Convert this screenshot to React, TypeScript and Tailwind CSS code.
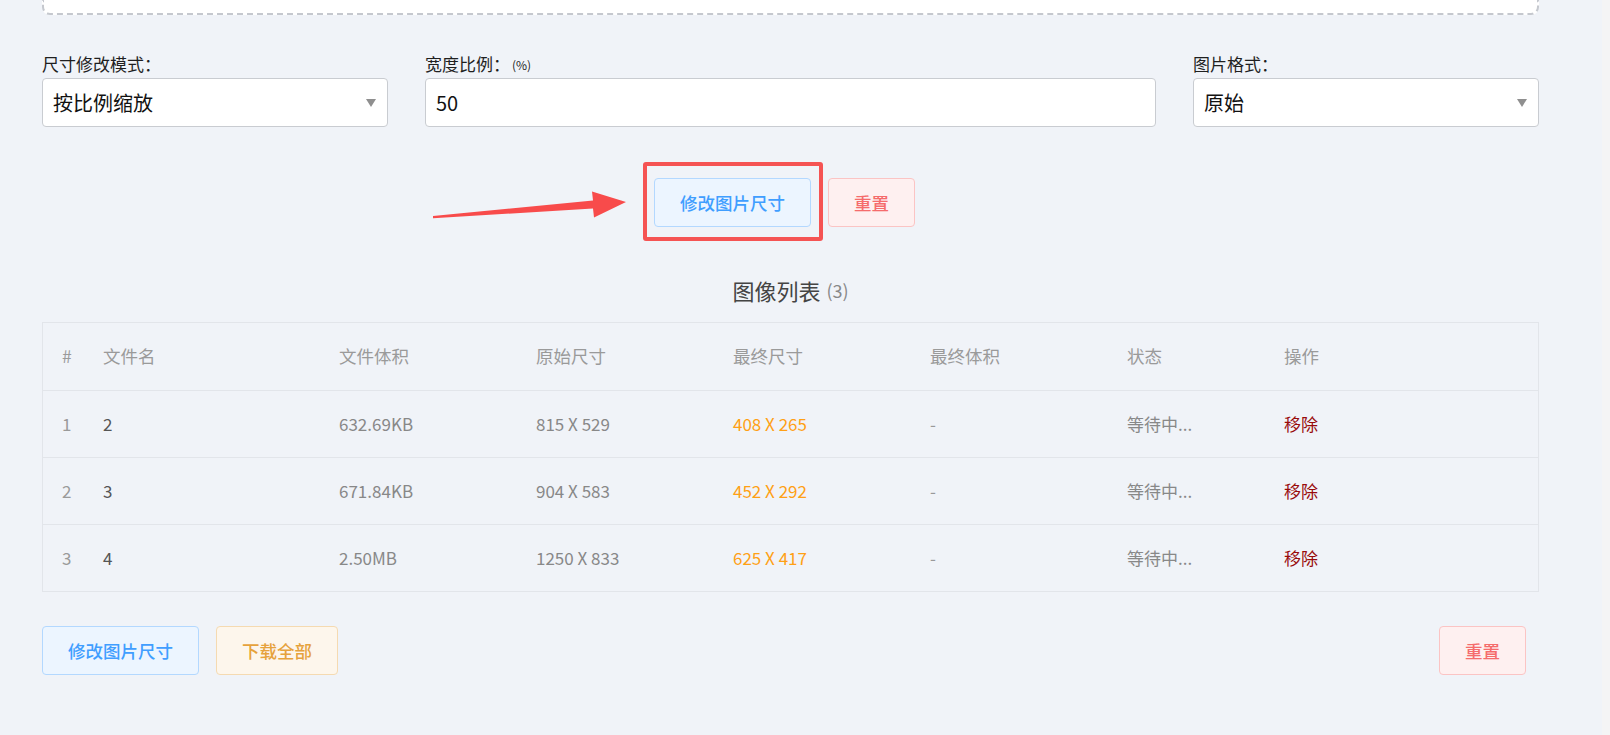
import React from "react";

const FONT = { fontFamily: '"Noto Sans CJK SC", "Noto Sans", sans-serif' };

interface ImageRow {
  id: number;
  name: string;
  size: string;
  original: string;
  final: string;
}

const rows: ImageRow[] = [
  { id: 1, name: "2", size: "632.69KB", original: "815 X 529", final: "408 X 265" },
  { id: 2, name: "3", size: "671.84KB", original: "904 X 583", final: "452 X 292" },
  { id: 3, name: "4", size: "2.50MB", original: "1250 X 833", final: "625 X 417" },
];

const tones = {
  blue: "bg-[#ecf5ff] border-[#b3d8ff] text-[#409eff]",
  red: "bg-[#fef0f0] border-[#fbc4c4] text-[#f56c6c]",
  orange: "bg-[#fdf6ec] border-[#f5dab1] text-[#e6a23c]",
};

function Btn({ tone, children }: { tone: keyof typeof tones; children: React.ReactNode }) {
  return (
    <button
      className={`h-[49px] px-[25px] rounded-[4px] border text-[17.5px] font-medium leading-none ${tones[tone]}`}
    >
      {children}
    </button>
  );
}

function Caret() {
  return (
    <svg width="10" height="8" viewBox="0 0 10 8" className="shrink-0">
      <path d="M0 0 H10 L5 8 Z" fill="#8f8f8f" />
    </svg>
  );
}

function Field({ label, extra, children }: { label: string; extra?: string; children: React.ReactNode }) {
  return (
    <div className="flex flex-col">
      <div className="h-[22px] flex items-end text-[17px] leading-[22px] text-[#1f1f1f]">
        {label}
        {extra && <span className="text-[12px] ml-[2px] leading-[20px]">{extra}</span>}
      </div>
      <div className="mt-[3px] h-[49px] bg-white border border-[#c9ccd1] rounded-[4px] flex items-center justify-between pl-[10px] pr-[11px] text-[20px] text-[#111]">
        {children}
      </div>
    </div>
  );
}

function Arrow() {
  return (
    <svg
      width="220"
      height="45"
      viewBox="0 0 220 45"
      className="absolute left-[420px] top-[185px] pointer-events-none"
    >
      <polygon
        points="13,31 173,15.6 172,6.6 206,17 174,32.6 173,23.6 13,33.2"
        fill="#f84b4b"
      />
    </svg>
  );
}

export default function App() {
  const headers = ["#", "文件名", "文件体积", "原始尺寸", "最终尺寸", "最终体积", "状态", "操作"];
  const grid = "grid grid-cols-[60px_236px_197px_197px_197px_197px_157px_1fr]";

  return (
    <div style={FONT} className="relative flex w-full h-[735px] bg-[#f0f3f8] overflow-hidden">
      <main className="flex-1 flex flex-col pl-[42px] pr-[63px]">
        <div className="h-[15px] bg-white border-2 border-t-0 border-dashed border-[#c5c8ce] rounded-b-[8px]" />

        <div className="mt-[38px] grid grid-cols-[346px_1fr_346px] gap-[37px]">
          <Field label="尺寸修改模式：">
            <span>按比例缩放</span>
            <Caret />
          </Field>
          <Field label="宽度比例：" extra="(%)">
            <span>50</span>
          </Field>
          <Field label="图片格式：">
            <span>原始</span>
            <Caret />
          </Field>
        </div>

        <div className="mt-[51px] flex justify-center gap-[17px] pr-[12px]">
          <div className="relative">
            <div className="absolute -left-[11px] -right-[12px] -top-[16px] -bottom-[14px] border-4 border-[#f55353] rounded-[3px]" />
            <Btn tone="blue">修改图片尺寸</Btn>
          </div>
          <Btn tone="red">重置</Btn>
        </div>

        <div className="mt-[48px] h-[30px] flex items-center justify-center text-[22px] text-[#444]">
          图像列表
          <span className="ml-[6px] text-[18px] text-[#888]">(3)</span>
        </div>

        <div className="mt-[17px] border border-[#e2e5ea] text-[17px]">
          <div className={`${grid} h-[67px] items-center text-[17.5px] text-[#9a9a9a]`}>
            {headers.map((h, i) => (
              <div key={i} className={i === 0 ? "pl-[19px]" : ""}>
                {h}
              </div>
            ))}
          </div>
          {rows.map((r) => (
            <div key={r.id} className={`${grid} h-[67px] items-center border-t border-[#e2e5ea]`}>
              <div className="pl-[19px] text-[#9a9a9a]">{r.id}</div>
              <div className="text-[#555]">{r.name}</div>
              <div className="text-[#888]">{r.size}</div>
              <div className="text-[#888]">{r.original}</div>
              <div className="text-[#ffa015]">{r.final}</div>
              <div className="text-[#999]">-</div>
              <div className="text-[#888]">等待中...</div>
              <div className="text-[#990b0b]">移除</div>
            </div>
          ))}
        </div>

        <div className="mt-[34px] flex items-center gap-[17px] pr-[13px]">
          <Btn tone="blue">修改图片尺寸</Btn>
          <Btn tone="orange">下载全部</Btn>
          <div className="flex-1" />
          <Btn tone="red">重置</Btn>
        </div>
      </main>
      <aside className="w-[8px] bg-[#f4f4f5]" />
      <Arrow />
    </div>
  );
}
